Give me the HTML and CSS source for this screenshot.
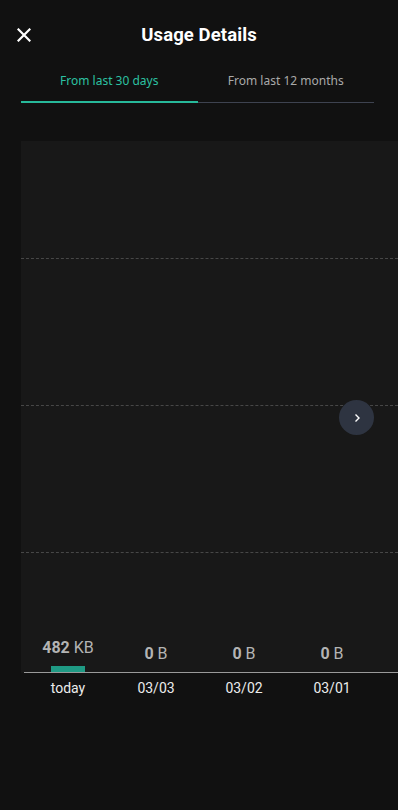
FILE: index.html
```html
<!DOCTYPE html>
<html lang="en">
<head>
<meta charset="utf-8">
<meta name="viewport" content="width=device-width, initial-scale=1">
<title>Usage Details</title>
<link rel="stylesheet" href="styles.css">
</head>
<body>
<div class="page">
  <header class="header">
    <button class="close" aria-label="Close">
      <svg width="14" height="14" viewBox="0 0 14 14"><path d="M1.5 1.5L12.5 12.5M12.5 1.5L1.5 12.5" stroke="#fff" stroke-width="2.2" stroke-linecap="square"/></svg>
    </button>
    <h1 class="title">Usage Details</h1>
    <span class="spacer"></span>
  </header>

  <nav class="tabs">
    <div class="tab active">From last 30 days</div>
    <div class="tab">From last 12 months</div>
  </nav>

  <section class="chart">
    <div class="grid-gap first"></div>
    <div class="grid-line"></div>
    <div class="grid-gap"></div>
    <div class="grid-line"></div>
    <div class="grid-gap"></div>
    <div class="grid-line"></div>
    <div class="bars">
      <div class="col">
        <div class="val"><b>482</b> KB</div>
        <div class="bar" style="height:6px"></div>
      </div>
      <div class="col">
        <div class="val"><b>0</b> B</div>
      </div>
      <div class="col">
        <div class="val"><b>0</b> B</div>
      </div>
      <div class="col">
        <div class="val"><b>0</b> B</div>
      </div>
    </div>
    <button class="next" aria-label="Next">
      <svg width="8" height="10" viewBox="0 0 8 10"><path d="M2.5 1.5L6 5L2.5 8.5" fill="none" stroke="#fff" stroke-width="1.4"/></svg>
    </button>
  </section>

  <div class="labels">
    <span>today</span>
    <span>03/03</span>
    <span>03/02</span>
    <span>03/01</span>
  </div>
</div>
</body>
</html>
```

FILE: styles.css
```css
html, body {
  margin: 0;
  padding: 0;
  background: #111111;
}
body {
  font-family: Roboto, "Noto Sans", sans-serif;
  color: #fff;
  overflow: hidden;
}
.page {
  width: 398px;
  height: 810px;
  overflow: hidden;
}
.header {
  height: 70px;
  display: grid;
  grid-template-columns: 48px 1fr 48px;
  align-items: center;
}
.close {
  background: none;
  border: 0;
  padding: 0 0 0 17px;
  margin: 0;
  height: 14px;
  display: flex;
  align-items: center;
  cursor: pointer;
}
.title {
  margin: 0;
  text-align: center;
  font-size: 18.5px;
  font-weight: 700;
  color: #fff;
  letter-spacing: 0.1px;
}
.tabs {
  display: flex;
  margin: 0 24px 0 21px;
}
.tab {
  flex: 1;
  text-align: center;
  font-family: "Noto Sans", Roboto, sans-serif;
  font-size: 12px;
  line-height: 16px;
  padding: 3px 0 12px;
  color: #a9a9a9;
  border-bottom: 1px solid #3e4350;
}
.tab.active {
  color: #2cc1a2;
  border-bottom: 2px solid #27b99a;
}
.tabs .tab:not(.active) {
  padding-bottom: 13px;
}
.chart {
  position: relative;
  margin: 38px 0 0 21px;
  background: #181818;
  display: flex;
  flex-direction: column;
}
.grid-gap {
  height: 146px;
}
.grid-gap.first {
  height: 117px;
}
.grid-line {
  height: 0;
  border-top: 1px dashed #474747;
}
.bars {
  height: 119px;
  margin-left: 3px;
  display: flex;
  align-items: flex-end;
  border-bottom: 1px solid #9a9a9a;
}
.col {
  width: 88px;
  display: flex;
  flex-direction: column;
  align-items: center;
}
.val {
  font-size: 16px;
  line-height: 18px;
  color: #b4b4b4;
  margin-bottom: 9px;
}
.val b {
  font-weight: 700;
}
.bar {
  width: 34px;
  background: #1f9a84;
}
.next {
  position: absolute;
  left: 318px;
  top: 259px;
  width: 35px;
  height: 35px;
  border-radius: 50%;
  border: 0;
  padding: 0;
  background: #2e3441;
  display: flex;
  align-items: center;
  justify-content: center;
}
.labels {
  display: flex;
  margin-left: 24px;
  padding-top: 6px;
}
.labels span {
  width: 88px;
  text-align: center;
  font-size: 14px;
  line-height: 18px;
  color: #ececec;
}
```
